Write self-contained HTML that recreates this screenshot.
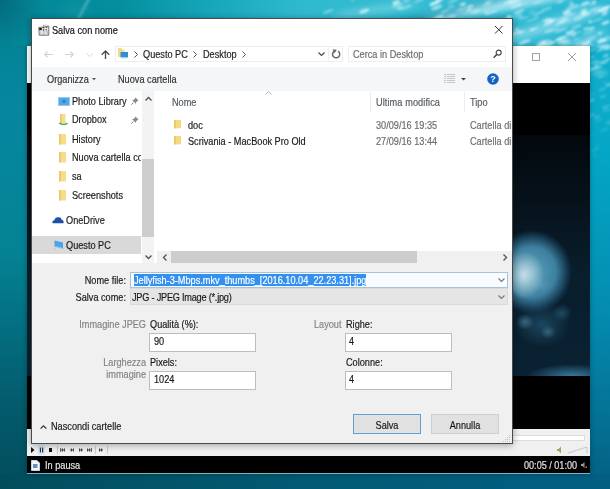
<!DOCTYPE html>
<html><head><meta charset="utf-8">
<style>
*{box-sizing:border-box;margin:0;padding:0}
html,body{width:610px;height:489px;overflow:hidden}
body{position:relative;font-family:"Liberation Sans",sans-serif;font-size:9.5px;letter-spacing:-0.15px;color:#1a1a1a;
background:linear-gradient(180deg,#04707f 0px,#048497 50px,#0787a0 105px,#048394 250px,#036f82 325px,#035b6c 405px,#024d5c 489px);}
.a{position:absolute}
.t{position:absolute;white-space:nowrap;line-height:12px;height:12px;font-size:10.2px;letter-spacing:0;transform:scaleX(.9);transform-origin:0 0;margin-top:.4px;-webkit-text-stroke:.18px currentColor}
.r{transform-origin:100% 0}
.c{transform-origin:50% 0}
svg{position:absolute;overflow:visible}
</style></head><body>

<!-- desktop water texture -->
<div class="a" style="left:0;top:0;width:610px;height:46px;background:linear-gradient(90deg,#048497 0px,#048a9a 45px,#048e9f 115px,#0a97a8 150px,#1aa8bd 220px,#2fb9cf 300px,#35bdd3 450px,#2cb8d4 610px)"></div>
<div class="a" style="left:0;top:0;width:80px;height:70px;background:radial-gradient(ellipse 45px 50px at 0 0,rgba(3,100,118,.75),rgba(3,100,118,0))"></div>

<div class="a" style="left:82px;top:-3px;width:3px;height:24px;background:rgba(140,210,222,.45);transform:rotate(28deg);filter:blur(1.2px)"></div>
<div class="a" style="left:60px;top:2px;width:30px;height:20px;background:rgba(40,160,175,.25);border-radius:50%;filter:blur(5px)"></div>
<div class="a" style="left:420px;top:2px;width:120px;height:10px;border-radius:50%;background:rgba(200,240,250,.45);transform:rotate(-12deg);filter:blur(3px)"></div>
<div class="a" style="left:500px;top:18px;width:110px;height:12px;border-radius:50%;background:rgba(200,240,250,.45);transform:rotate(-18deg);filter:blur(3px)"></div>
<div class="a" style="left:330px;top:6px;width:90px;height:8px;border-radius:50%;background:rgba(200,240,248,.3);transform:rotate(-8deg);filter:blur(3px)"></div>
<div class="a" style="left:540px;top:40px;width:70px;height:10px;border-radius:50%;background:rgba(200,240,250,.35);transform:rotate(-25deg);filter:blur(3px)"></div>
<div class="a" style="left:590px;top:46px;width:20px;height:443px;background:linear-gradient(180deg,#12b0cf 0px,#03a5c4 119px,#048db2 259px,#046b8e 399px,#025f82 443px)"></div>
<div class="a" style="left:592px;top:70px;width:16px;height:6px;border-radius:50%;background:rgba(200,240,250,.35);filter:blur(2px)"></div>
<div class="a" style="left:455px;top:0px;width:120px;height:9px;border-radius:50%;background:rgba(215,245,252,.55);transform:rotate(-9deg);filter:blur(2.5px)"></div>
<div class="a" style="left:360px;top:10px;width:150px;height:10px;border-radius:50%;background:rgba(5,130,160,.35);transform:rotate(-14deg);filter:blur(3px)"></div>
<svg style="left:300px;top:0" width="310" height="170" viewBox="0 0 310 170"><defs><filter id="bl" x="-20%" y="-20%" width="140%" height="140%"><feGaussianBlur stdDeviation="0.9"/></filter></defs><g filter="url(#bl)"><ellipse cx="56.2" cy="23.3" rx="4.2" ry="0.9" transform="rotate(-20 56.2 23.3)" fill="#e8fbff" opacity="0.29"/><ellipse cx="185.4" cy="38.0" rx="3.1" ry="1.7" transform="rotate(-20 185.4 38.0)" fill="#e8fbff" opacity="0.68"/><ellipse cx="97.0" cy="5.4" rx="6.1" ry="1.1" transform="rotate(-20 97.0 5.4)" fill="#e8fbff" opacity="0.51"/><ellipse cx="236.9" cy="17.1" rx="2.3" ry="0.9" transform="rotate(-20 236.9 17.1)" fill="#e8fbff" opacity="0.34"/><ellipse cx="246.0" cy="19.7" rx="4.9" ry="1.4" transform="rotate(-20 246.0 19.7)" fill="#e8fbff" opacity="0.38"/><ellipse cx="270.0" cy="32.2" rx="4.9" ry="1.5" transform="rotate(-20 270.0 32.2)" fill="#e8fbff" opacity="0.64"/><ellipse cx="100.1" cy="22.5" rx="5.3" ry="1.9" transform="rotate(-20 100.1 22.5)" fill="#e8fbff" opacity="0.51"/><ellipse cx="286.2" cy="14.4" rx="5.0" ry="1.6" transform="rotate(-20 286.2 14.4)" fill="#e8fbff" opacity="0.46"/><ellipse cx="279.2" cy="43.5" rx="5.3" ry="0.9" transform="rotate(-20 279.2 43.5)" fill="#e8fbff" opacity="0.57"/><ellipse cx="238.8" cy="45.7" rx="3.4" ry="1.3" transform="rotate(-20 238.8 45.7)" fill="#e8fbff" opacity="0.55"/><ellipse cx="285.4" cy="3.7" rx="4.7" ry="2.0" transform="rotate(-20 285.4 3.7)" fill="#e8fbff" opacity="0.62"/><ellipse cx="284.0" cy="12.8" rx="3.8" ry="2.0" transform="rotate(-20 284.0 12.8)" fill="#e8fbff" opacity="0.68"/><ellipse cx="99.7" cy="8.1" rx="3.2" ry="1.5" transform="rotate(-20 99.7 8.1)" fill="#e8fbff" opacity="0.52"/><ellipse cx="139.0" cy="0.2" rx="3.8" ry="1.6" transform="rotate(-20 139.0 0.2)" fill="#e8fbff" opacity="0.68"/><ellipse cx="248.2" cy="23.7" rx="5.4" ry="0.9" transform="rotate(-20 248.2 23.7)" fill="#e8fbff" opacity="0.65"/><ellipse cx="267.1" cy="40.2" rx="4.0" ry="1.4" transform="rotate(-20 267.1 40.2)" fill="#e8fbff" opacity="0.30"/><ellipse cx="235.9" cy="2.9" rx="3.0" ry="1.0" transform="rotate(-20 235.9 2.9)" fill="#e8fbff" opacity="0.40"/><ellipse cx="52.9" cy="0.0" rx="2.5" ry="1.3" transform="rotate(-20 52.9 0.0)" fill="#e8fbff" opacity="0.26"/><ellipse cx="286.0" cy="28.2" rx="3.3" ry="1.3" transform="rotate(-20 286.0 28.2)" fill="#e8fbff" opacity="0.41"/><ellipse cx="196.1" cy="22.3" rx="2.5" ry="1.3" transform="rotate(-20 196.1 22.3)" fill="#e8fbff" opacity="0.37"/><ellipse cx="277.0" cy="7.4" rx="6.8" ry="1.5" transform="rotate(-20 277.0 7.4)" fill="#e8fbff" opacity="0.32"/><ellipse cx="214.9" cy="1.2" rx="6.9" ry="2.0" transform="rotate(-20 214.9 1.2)" fill="#e8fbff" opacity="0.56"/><ellipse cx="138.5" cy="16.9" rx="5.9" ry="1.5" transform="rotate(-20 138.5 16.9)" fill="#e8fbff" opacity="0.60"/><ellipse cx="307.2" cy="39.2" rx="6.1" ry="1.8" transform="rotate(-20 307.2 39.2)" fill="#e8fbff" opacity="0.35"/><ellipse cx="208.8" cy="16.4" rx="2.1" ry="1.2" transform="rotate(-20 208.8 16.4)" fill="#e8fbff" opacity="0.37"/><ellipse cx="248.7" cy="44.0" rx="6.7" ry="2.2" transform="rotate(-20 248.7 44.0)" fill="#e8fbff" opacity="0.68"/><ellipse cx="169.2" cy="10.1" rx="3.0" ry="1.1" transform="rotate(-20 169.2 10.1)" fill="#e8fbff" opacity="0.53"/><ellipse cx="291.1" cy="38.7" rx="5.3" ry="1.9" transform="rotate(-20 291.1 38.7)" fill="#e8fbff" opacity="0.29"/><ellipse cx="241.7" cy="41.8" rx="5.8" ry="1.5" transform="rotate(-20 241.7 41.8)" fill="#e8fbff" opacity="0.33"/><ellipse cx="268.9" cy="15.3" rx="6.9" ry="1.4" transform="rotate(-20 268.9 15.3)" fill="#e8fbff" opacity="0.43"/><ellipse cx="300.0" cy="33.3" rx="2.6" ry="1.0" transform="rotate(-20 300.0 33.3)" fill="#e8fbff" opacity="0.66"/><ellipse cx="272.5" cy="6.7" rx="6.9" ry="1.7" transform="rotate(-20 272.5 6.7)" fill="#e8fbff" opacity="0.41"/><ellipse cx="216.2" cy="6.0" rx="6.9" ry="1.7" transform="rotate(-20 216.2 6.0)" fill="#e8fbff" opacity="0.49"/><ellipse cx="297.5" cy="20.0" rx="6.1" ry="1.1" transform="rotate(-20 297.5 20.0)" fill="#e8fbff" opacity="0.36"/><ellipse cx="137.9" cy="19.3" rx="6.6" ry="1.3" transform="rotate(-20 137.9 19.3)" fill="#e8fbff" opacity="0.46"/><ellipse cx="224.3" cy="41.6" rx="6.6" ry="1.5" transform="rotate(-20 224.3 41.6)" fill="#e8fbff" opacity="0.49"/><ellipse cx="210.2" cy="0.9" rx="2.9" ry="0.8" transform="rotate(-20 210.2 0.9)" fill="#e8fbff" opacity="0.61"/><ellipse cx="218.1" cy="15.0" rx="4.8" ry="1.9" transform="rotate(-20 218.1 15.0)" fill="#e8fbff" opacity="0.30"/><ellipse cx="219.0" cy="11.4" rx="5.9" ry="1.5" transform="rotate(-20 219.0 11.4)" fill="#e8fbff" opacity="0.50"/><ellipse cx="262.9" cy="42.0" rx="5.1" ry="1.5" transform="rotate(-20 262.9 42.0)" fill="#e8fbff" opacity="0.48"/><ellipse cx="248.7" cy="20.8" rx="4.4" ry="2.1" transform="rotate(-20 248.7 20.8)" fill="#e8fbff" opacity="0.56"/><ellipse cx="286.4" cy="43.3" rx="4.8" ry="2.1" transform="rotate(-20 286.4 43.3)" fill="#e8fbff" opacity="0.63"/><ellipse cx="64.2" cy="11.1" rx="5.3" ry="1.9" transform="rotate(-20 64.2 11.1)" fill="#e8fbff" opacity="0.65"/><ellipse cx="124.8" cy="43.8" rx="4.4" ry="2.2" transform="rotate(-20 124.8 43.8)" fill="#e8fbff" opacity="0.62"/><ellipse cx="162.0" cy="9.0" rx="5.6" ry="0.8" transform="rotate(-20 162.0 9.0)" fill="#e8fbff" opacity="0.50"/><ellipse cx="189.5" cy="0.8" rx="5.1" ry="1.5" transform="rotate(-20 189.5 0.8)" fill="#e8fbff" opacity="0.28"/><ellipse cx="307.2" cy="36.3" rx="2.5" ry="1.2" transform="rotate(-20 307.2 36.3)" fill="#e8fbff" opacity="0.27"/><ellipse cx="266.9" cy="12.4" rx="4.1" ry="2.1" transform="rotate(-20 266.9 12.4)" fill="#e8fbff" opacity="0.62"/><ellipse cx="221.4" cy="32.2" rx="2.3" ry="1.8" transform="rotate(-20 221.4 32.2)" fill="#e8fbff" opacity="0.44"/><ellipse cx="271.5" cy="3.9" rx="2.3" ry="2.0" transform="rotate(-20 271.5 3.9)" fill="#e8fbff" opacity="0.45"/><ellipse cx="131.2" cy="5.0" rx="2.3" ry="1.1" transform="rotate(-20 131.2 5.0)" fill="#e8fbff" opacity="0.39"/><ellipse cx="152.0" cy="34.9" rx="4.5" ry="1.0" transform="rotate(-20 152.0 34.9)" fill="#e8fbff" opacity="0.41"/><ellipse cx="28.0" cy="11.5" rx="5.7" ry="1.6" transform="rotate(-20 28.0 11.5)" fill="#e8fbff" opacity="0.34"/><ellipse cx="198.3" cy="43.0" rx="6.1" ry="1.4" transform="rotate(-20 198.3 43.0)" fill="#e8fbff" opacity="0.47"/><ellipse cx="278.1" cy="18.1" rx="5.4" ry="2.2" transform="rotate(-20 278.1 18.1)" fill="#e8fbff" opacity="0.40"/><ellipse cx="277.7" cy="32.5" rx="4.0" ry="1.3" transform="rotate(-20 277.7 32.5)" fill="#e8fbff" opacity="0.27"/><ellipse cx="136.7" cy="7.5" rx="6.2" ry="2.0" transform="rotate(-20 136.7 7.5)" fill="#e8fbff" opacity="0.55"/><ellipse cx="145.0" cy="11.1" rx="4.3" ry="1.0" transform="rotate(-20 145.0 11.1)" fill="#e8fbff" opacity="0.45"/><ellipse cx="153.4" cy="16.4" rx="3.9" ry="1.5" transform="rotate(-20 153.4 16.4)" fill="#e8fbff" opacity="0.48"/><ellipse cx="118.4" cy="23.2" rx="3.3" ry="0.9" transform="rotate(-20 118.4 23.2)" fill="#e8fbff" opacity="0.43"/><ellipse cx="261.0" cy="30.2" rx="6.4" ry="1.3" transform="rotate(-20 261.0 30.2)" fill="#e8fbff" opacity="0.40"/><ellipse cx="307.2" cy="6.9" rx="5.2" ry="0.9" transform="rotate(-20 307.2 6.9)" fill="#e8fbff" opacity="0.63"/><ellipse cx="289.4" cy="28.9" rx="6.1" ry="1.0" transform="rotate(-20 289.4 28.9)" fill="#e8fbff" opacity="0.49"/><ellipse cx="276.5" cy="26.9" rx="5.4" ry="1.8" transform="rotate(-20 276.5 26.9)" fill="#e8fbff" opacity="0.35"/><ellipse cx="234.4" cy="28.8" rx="4.4" ry="0.8" transform="rotate(-20 234.4 28.8)" fill="#e8fbff" opacity="0.61"/><ellipse cx="260.5" cy="23.1" rx="5.3" ry="0.9" transform="rotate(-20 260.5 23.1)" fill="#e8fbff" opacity="0.58"/><ellipse cx="135.6" cy="3.4" rx="5.6" ry="1.1" transform="rotate(-20 135.6 3.4)" fill="#e8fbff" opacity="0.58"/><ellipse cx="305.5" cy="22.7" rx="4.4" ry="1.8" transform="rotate(-20 305.5 22.7)" fill="#e8fbff" opacity="0.60"/><ellipse cx="232.0" cy="29.6" rx="2.7" ry="1.2" transform="rotate(-20 232.0 29.6)" fill="#e8fbff" opacity="0.58"/><ellipse cx="151.9" cy="26.1" rx="2.3" ry="1.2" transform="rotate(-20 151.9 26.1)" fill="#e8fbff" opacity="0.55"/><ellipse cx="248.6" cy="31.1" rx="4.6" ry="1.5" transform="rotate(-20 248.6 31.1)" fill="#e8fbff" opacity="0.46"/><ellipse cx="86.2" cy="41.1" rx="6.9" ry="2.1" transform="rotate(-20 86.2 41.1)" fill="#e8fbff" opacity="0.26"/><ellipse cx="191.9" cy="12.4" rx="6.7" ry="1.1" transform="rotate(-20 191.9 12.4)" fill="#e8fbff" opacity="0.51"/><ellipse cx="288.5" cy="32.4" rx="6.5" ry="1.5" transform="rotate(-20 288.5 32.4)" fill="#e8fbff" opacity="0.26"/><ellipse cx="151.1" cy="6.5" rx="3.6" ry="2.0" transform="rotate(-20 151.1 6.5)" fill="#e8fbff" opacity="0.25"/><ellipse cx="261.0" cy="38.6" rx="6.6" ry="1.8" transform="rotate(-20 261.0 38.6)" fill="#e8fbff" opacity="0.66"/><ellipse cx="147.5" cy="17.1" rx="7.0" ry="1.6" transform="rotate(-20 147.5 17.1)" fill="#e8fbff" opacity="0.41"/><ellipse cx="186.3" cy="12.7" rx="2.5" ry="2.0" transform="rotate(-20 186.3 12.7)" fill="#e8fbff" opacity="0.38"/><ellipse cx="297.9" cy="11.5" rx="4.6" ry="1.1" transform="rotate(-20 297.9 11.5)" fill="#e8fbff" opacity="0.42"/><ellipse cx="301.8" cy="40.7" rx="5.2" ry="2.1" transform="rotate(-20 301.8 40.7)" fill="#e8fbff" opacity="0.67"/><ellipse cx="216.4" cy="33.1" rx="5.7" ry="1.4" transform="rotate(-20 216.4 33.1)" fill="#e8fbff" opacity="0.59"/><ellipse cx="238.2" cy="13.2" rx="6.6" ry="1.0" transform="rotate(-20 238.2 13.2)" fill="#e8fbff" opacity="0.46"/><ellipse cx="305.6" cy="12.0" rx="3.5" ry="1.6" transform="rotate(-20 305.6 12.0)" fill="#e8fbff" opacity="0.43"/><ellipse cx="106.0" cy="7.4" rx="6.5" ry="1.5" transform="rotate(-20 106.0 7.4)" fill="#e8fbff" opacity="0.35"/><ellipse cx="292.2" cy="45.8" rx="2.7" ry="1.1" transform="rotate(-20 292.2 45.8)" fill="#e8fbff" opacity="0.29"/><ellipse cx="162.8" cy="4.2" rx="3.3" ry="1.6" transform="rotate(-20 162.8 4.2)" fill="#e8fbff" opacity="0.65"/><ellipse cx="260.8" cy="19.0" rx="4.6" ry="1.3" transform="rotate(-20 260.8 19.0)" fill="#e8fbff" opacity="0.40"/><ellipse cx="283.7" cy="9.9" rx="3.2" ry="1.4" transform="rotate(-20 283.7 9.9)" fill="#e8fbff" opacity="0.45"/><ellipse cx="301.4" cy="39.0" rx="2.1" ry="0.8" transform="rotate(-20 301.4 39.0)" fill="#e8fbff" opacity="0.57"/><ellipse cx="290.2" cy="21.8" rx="2.0" ry="1.3" transform="rotate(-20 290.2 21.8)" fill="#e8fbff" opacity="0.67"/><ellipse cx="276.3" cy="39.4" rx="3.2" ry="1.0" transform="rotate(-20 276.3 39.4)" fill="#e8fbff" opacity="0.32"/><ellipse cx="254.9" cy="29.8" rx="4.3" ry="1.6" transform="rotate(-20 254.9 29.8)" fill="#e8fbff" opacity="0.27"/><ellipse cx="267.5" cy="10.7" rx="5.2" ry="1.2" transform="rotate(-20 267.5 10.7)" fill="#e8fbff" opacity="0.31"/><ellipse cx="224.2" cy="17.9" rx="5.0" ry="0.8" transform="rotate(-20 224.2 17.9)" fill="#e8fbff" opacity="0.39"/><ellipse cx="194.7" cy="44.1" rx="6.4" ry="1.5" transform="rotate(-20 194.7 44.1)" fill="#e8fbff" opacity="0.36"/><ellipse cx="152.8" cy="1.0" rx="5.4" ry="1.4" transform="rotate(-20 152.8 1.0)" fill="#e8fbff" opacity="0.37"/><ellipse cx="243.2" cy="42.6" rx="2.2" ry="1.3" transform="rotate(-20 243.2 42.6)" fill="#e8fbff" opacity="0.44"/><ellipse cx="246.5" cy="9.1" rx="5.7" ry="1.5" transform="rotate(-20 246.5 9.1)" fill="#e8fbff" opacity="0.34"/><ellipse cx="304.4" cy="14.3" rx="3.2" ry="1.1" transform="rotate(-20 304.4 14.3)" fill="#e8fbff" opacity="0.59"/><ellipse cx="149.0" cy="43.8" rx="2.9" ry="1.1" transform="rotate(-20 149.0 43.8)" fill="#e8fbff" opacity="0.44"/><ellipse cx="242.8" cy="43.6" rx="4.0" ry="1.1" transform="rotate(-20 242.8 43.6)" fill="#e8fbff" opacity="0.69"/><ellipse cx="96.1" cy="2.4" rx="4.0" ry="2.1" transform="rotate(-20 96.1 2.4)" fill="#e8fbff" opacity="0.65"/><ellipse cx="260.1" cy="1.5" rx="3.9" ry="1.3" transform="rotate(-20 260.1 1.5)" fill="#e8fbff" opacity="0.40"/><ellipse cx="106.8" cy="0.1" rx="3.8" ry="2.1" transform="rotate(-20 106.8 0.1)" fill="#e8fbff" opacity="0.31"/><ellipse cx="303.3" cy="9.5" rx="6.1" ry="2.0" transform="rotate(-20 303.3 9.5)" fill="#e8fbff" opacity="0.44"/><ellipse cx="294.8" cy="8.9" rx="6.5" ry="0.8" transform="rotate(-20 294.8 8.9)" fill="#e8fbff" opacity="0.43"/><ellipse cx="273.6" cy="35.3" rx="2.2" ry="0.9" transform="rotate(-20 273.6 35.3)" fill="#e8fbff" opacity="0.66"/><ellipse cx="232.0" cy="12.1" rx="3.6" ry="1.2" transform="rotate(-20 232.0 12.1)" fill="#e8fbff" opacity="0.25"/><ellipse cx="262.0" cy="42.2" rx="6.7" ry="0.8" transform="rotate(-20 262.0 42.2)" fill="#e8fbff" opacity="0.36"/><ellipse cx="175.3" cy="11.5" rx="4.5" ry="2.1" transform="rotate(-20 175.3 11.5)" fill="#e8fbff" opacity="0.33"/><ellipse cx="271.7" cy="34.0" rx="5.9" ry="1.7" transform="rotate(-20 271.7 34.0)" fill="#e8fbff" opacity="0.40"/><ellipse cx="134.1" cy="3.0" rx="4.8" ry="1.3" transform="rotate(-20 134.1 3.0)" fill="#e8fbff" opacity="0.69"/><ellipse cx="287.8" cy="45.4" rx="2.4" ry="0.9" transform="rotate(-20 287.8 45.4)" fill="#e8fbff" opacity="0.47"/><ellipse cx="252.4" cy="20.6" rx="4.1" ry="1.7" transform="rotate(-20 252.4 20.6)" fill="#e8fbff" opacity="0.55"/><ellipse cx="260.4" cy="39.0" rx="2.6" ry="2.0" transform="rotate(-20 260.4 39.0)" fill="#e8fbff" opacity="0.38"/><ellipse cx="220.5" cy="17.2" rx="3.0" ry="1.1" transform="rotate(-20 220.5 17.2)" fill="#e8fbff" opacity="0.36"/><ellipse cx="240.1" cy="45.6" rx="4.4" ry="1.9" transform="rotate(-20 240.1 45.6)" fill="#e8fbff" opacity="0.63"/><ellipse cx="293.8" cy="1.9" rx="2.6" ry="1.1" transform="rotate(-20 293.8 1.9)" fill="#e8fbff" opacity="0.69"/><ellipse cx="224.3" cy="42.8" rx="6.3" ry="1.4" transform="rotate(-20 224.3 42.8)" fill="#e8fbff" opacity="0.37"/><ellipse cx="266.6" cy="43.5" rx="5.0" ry="1.7" transform="rotate(-20 266.6 43.5)" fill="#e8fbff" opacity="0.35"/><ellipse cx="170.4" cy="6.5" rx="3.3" ry="1.6" transform="rotate(-20 170.4 6.5)" fill="#e8fbff" opacity="0.54"/><ellipse cx="119.2" cy="0.5" rx="5.4" ry="1.1" transform="rotate(-20 119.2 0.5)" fill="#e8fbff" opacity="0.39"/><ellipse cx="216.6" cy="29.4" rx="2.8" ry="1.8" transform="rotate(-20 216.6 29.4)" fill="#e8fbff" opacity="0.43"/><ellipse cx="154.2" cy="26.1" rx="4.1" ry="2.0" transform="rotate(-20 154.2 26.1)" fill="#e8fbff" opacity="0.70"/><ellipse cx="185.2" cy="37.7" rx="6.4" ry="1.4" transform="rotate(-20 185.2 37.7)" fill="#e8fbff" opacity="0.32"/><ellipse cx="292.9" cy="4.1" rx="3.9" ry="1.5" transform="rotate(-20 292.9 4.1)" fill="#e8fbff" opacity="0.32"/><ellipse cx="303.8" cy="9.1" rx="6.7" ry="2.2" transform="rotate(-20 303.8 9.1)" fill="#e8fbff" opacity="0.47"/><ellipse cx="291.8" cy="28.5" rx="2.8" ry="1.9" transform="rotate(-20 291.8 28.5)" fill="#e8fbff" opacity="0.35"/><ellipse cx="208.9" cy="17.6" rx="3.2" ry="1.8" transform="rotate(-20 208.9 17.6)" fill="#e8fbff" opacity="0.65"/><ellipse cx="43.7" cy="38.6" rx="5.0" ry="1.6" transform="rotate(-20 43.7 38.6)" fill="#e8fbff" opacity="0.53"/><ellipse cx="185.7" cy="30.3" rx="4.2" ry="0.8" transform="rotate(-20 185.7 30.3)" fill="#e8fbff" opacity="0.53"/><ellipse cx="267.1" cy="21.1" rx="4.4" ry="0.9" transform="rotate(-20 267.1 21.1)" fill="#e8fbff" opacity="0.31"/><ellipse cx="187.0" cy="4.2" rx="4.6" ry="0.9" transform="rotate(-20 187.0 4.2)" fill="#e8fbff" opacity="0.54"/><ellipse cx="207.3" cy="2.5" rx="3.9" ry="2.1" transform="rotate(-20 207.3 2.5)" fill="#e8fbff" opacity="0.31"/><ellipse cx="282.6" cy="45.8" rx="6.1" ry="1.1" transform="rotate(-20 282.6 45.8)" fill="#e8fbff" opacity="0.69"/><ellipse cx="102.8" cy="41.2" rx="6.1" ry="1.0" transform="rotate(-20 102.8 41.2)" fill="#e8fbff" opacity="0.48"/><ellipse cx="294.9" cy="9.6" rx="4.5" ry="1.2" transform="rotate(-20 294.9 9.6)" fill="#e8fbff" opacity="0.27"/><ellipse cx="245.9" cy="41.2" rx="5.9" ry="1.0" transform="rotate(-20 245.9 41.2)" fill="#e8fbff" opacity="0.49"/><ellipse cx="177.3" cy="36.7" rx="7.0" ry="1.6" transform="rotate(-20 177.3 36.7)" fill="#e8fbff" opacity="0.41"/><ellipse cx="263.9" cy="20.3" rx="5.7" ry="0.9" transform="rotate(-20 263.9 20.3)" fill="#e8fbff" opacity="0.62"/><ellipse cx="224.9" cy="30.5" rx="2.0" ry="0.8" transform="rotate(-20 224.9 30.5)" fill="#e8fbff" opacity="0.32"/><ellipse cx="231.8" cy="19.9" rx="6.5" ry="1.0" transform="rotate(-20 231.8 19.9)" fill="#e8fbff" opacity="0.35"/><ellipse cx="240.1" cy="1.0" rx="3.8" ry="0.9" transform="rotate(-20 240.1 1.0)" fill="#e8fbff" opacity="0.41"/><ellipse cx="93.1" cy="43.1" rx="2.7" ry="0.9" transform="rotate(-20 93.1 43.1)" fill="#e8fbff" opacity="0.54"/><ellipse cx="307.4" cy="129.0" rx="3.2" ry="1.1" transform="rotate(-20 307.4 129.0)" fill="#e8fbff" opacity="0.07"/><ellipse cx="302.9" cy="96.6" rx="3.1" ry="1.6" transform="rotate(-20 302.9 96.6)" fill="#e8fbff" opacity="0.22"/><ellipse cx="308.7" cy="121.4" rx="2.7" ry="1.9" transform="rotate(-20 308.7 121.4)" fill="#e8fbff" opacity="0.09"/><ellipse cx="300.6" cy="77.0" rx="2.7" ry="0.9" transform="rotate(-20 300.6 77.0)" fill="#e8fbff" opacity="0.36"/><ellipse cx="290.2" cy="95.1" rx="4.8" ry="1.0" transform="rotate(-20 290.2 95.1)" fill="#e8fbff" opacity="0.17"/><ellipse cx="302.2" cy="89.3" rx="3.9" ry="1.8" transform="rotate(-20 302.2 89.3)" fill="#e8fbff" opacity="0.17"/><ellipse cx="296.2" cy="65.7" rx="2.1" ry="1.9" transform="rotate(-20 296.2 65.7)" fill="#e8fbff" opacity="0.40"/><ellipse cx="304.3" cy="46.1" rx="4.5" ry="1.7" transform="rotate(-20 304.3 46.1)" fill="#e8fbff" opacity="0.36"/><ellipse cx="304.8" cy="82.5" rx="2.7" ry="0.9" transform="rotate(-20 304.8 82.5)" fill="#e8fbff" opacity="0.20"/><ellipse cx="290.8" cy="69.3" rx="4.2" ry="1.6" transform="rotate(-20 290.8 69.3)" fill="#e8fbff" opacity="0.41"/><ellipse cx="304.2" cy="62.5" rx="3.7" ry="1.3" transform="rotate(-20 304.2 62.5)" fill="#e8fbff" opacity="0.42"/><ellipse cx="300.5" cy="62.4" rx="3.9" ry="2.0" transform="rotate(-20 300.5 62.4)" fill="#e8fbff" opacity="0.24"/><ellipse cx="307.6" cy="46.2" rx="2.8" ry="1.1" transform="rotate(-20 307.6 46.2)" fill="#e8fbff" opacity="0.46"/><ellipse cx="308.9" cy="123.3" rx="3.0" ry="1.9" transform="rotate(-20 308.9 123.3)" fill="#e8fbff" opacity="0.13"/><ellipse cx="294.8" cy="149.8" rx="3.9" ry="1.6" transform="rotate(-20 294.8 149.8)" fill="#e8fbff" opacity="0.09"/><ellipse cx="309.6" cy="84.6" rx="4.5" ry="1.6" transform="rotate(-20 309.6 84.6)" fill="#e8fbff" opacity="0.35"/><ellipse cx="298.7" cy="120.0" rx="3.7" ry="1.2" transform="rotate(-20 298.7 120.0)" fill="#e8fbff" opacity="0.12"/><ellipse cx="302.5" cy="48.6" rx="4.7" ry="1.0" transform="rotate(-20 302.5 48.6)" fill="#e8fbff" opacity="0.21"/><ellipse cx="292.1" cy="153.4" rx="3.0" ry="1.0" transform="rotate(-20 292.1 153.4)" fill="#e8fbff" opacity="0.04"/><ellipse cx="290.8" cy="115.2" rx="3.9" ry="1.6" transform="rotate(-20 290.8 115.2)" fill="#e8fbff" opacity="0.21"/><ellipse cx="291.3" cy="100.4" rx="3.1" ry="1.8" transform="rotate(-20 291.3 100.4)" fill="#e8fbff" opacity="0.28"/><ellipse cx="307.8" cy="48.0" rx="4.6" ry="1.9" transform="rotate(-20 307.8 48.0)" fill="#e8fbff" opacity="0.52"/><ellipse cx="292.1" cy="57.2" rx="2.3" ry="0.8" transform="rotate(-20 292.1 57.2)" fill="#e8fbff" opacity="0.45"/><ellipse cx="306.2" cy="106.6" rx="4.5" ry="1.6" transform="rotate(-20 306.2 106.6)" fill="#e8fbff" opacity="0.16"/><ellipse cx="292.0" cy="49.7" rx="4.3" ry="1.0" transform="rotate(-20 292.0 49.7)" fill="#e8fbff" opacity="0.30"/><ellipse cx="298.5" cy="46.4" rx="2.8" ry="1.1" transform="rotate(-20 298.5 46.4)" fill="#e8fbff" opacity="0.45"/><ellipse cx="297.4" cy="67.8" rx="4.9" ry="1.4" transform="rotate(-20 297.4 67.8)" fill="#e8fbff" opacity="0.41"/><ellipse cx="302.4" cy="46.7" rx="3.2" ry="1.3" transform="rotate(-20 302.4 46.7)" fill="#e8fbff" opacity="0.47"/><ellipse cx="296.9" cy="117.0" rx="3.6" ry="1.1" transform="rotate(-20 296.9 117.0)" fill="#e8fbff" opacity="0.23"/><ellipse cx="291.8" cy="135.1" rx="2.5" ry="0.8" transform="rotate(-20 291.8 135.1)" fill="#e8fbff" opacity="0.09"/><ellipse cx="305.2" cy="162.0" rx="2.0" ry="1.4" transform="rotate(-20 305.2 162.0)" fill="#e8fbff" opacity="0.04"/><ellipse cx="305.9" cy="55.5" rx="3.5" ry="1.2" transform="rotate(-20 305.9 55.5)" fill="#e8fbff" opacity="0.46"/><ellipse cx="295.2" cy="156.0" rx="2.9" ry="1.1" transform="rotate(-20 295.2 156.0)" fill="#e8fbff" opacity="0.07"/><ellipse cx="300.0" cy="50.4" rx="3.9" ry="0.9" transform="rotate(-20 300.0 50.4)" fill="#e8fbff" opacity="0.46"/><ellipse cx="303.9" cy="129.8" rx="3.9" ry="1.2" transform="rotate(-20 303.9 129.8)" fill="#e8fbff" opacity="0.12"/><ellipse cx="297.9" cy="146.8" rx="2.3" ry="1.9" transform="rotate(-20 297.9 146.8)" fill="#e8fbff" opacity="0.05"/><ellipse cx="294.1" cy="62.2" rx="4.7" ry="1.4" transform="rotate(-20 294.1 62.2)" fill="#e8fbff" opacity="0.29"/><ellipse cx="307.7" cy="59.5" rx="3.4" ry="1.4" transform="rotate(-20 307.7 59.5)" fill="#e8fbff" opacity="0.42"/><ellipse cx="305.1" cy="108.3" rx="3.0" ry="1.2" transform="rotate(-20 305.1 108.3)" fill="#e8fbff" opacity="0.13"/><ellipse cx="306.9" cy="110.6" rx="4.2" ry="1.0" transform="rotate(-20 306.9 110.6)" fill="#e8fbff" opacity="0.18"/></g></svg>
<div class="a" style="left:0;top:474px;width:610px;height:15px;background:linear-gradient(90deg,#024d5c 0px,#025a73 300px,#025f82 575px,#025f82 610px)"></div>

<!-- ===== video player window ===== -->
<div class="a" style="left:27px;top:46px;width:563px;height:428px;background:#000;box-shadow:0 0 5px rgba(0,0,0,.3)"></div>
<div class="a" style="left:27px;top:46px;width:563px;height:37px;background:#fff"></div>
<div class="a" style="left:27px;top:135px;width:563px;height:241px;background:
radial-gradient(ellipse 20px 24px at 497px 140px,rgba(225,240,245,.8),rgba(225,240,245,0) 100%),
radial-gradient(ellipse 40px 42px at 505px 137px,rgba(100,170,195,.95) 0%,rgba(70,145,180,.85) 60%,rgba(40,100,140,.3) 90%,rgba(20,70,100,0) 100%),
radial-gradient(ellipse 10px 7px at 515px 150px,rgba(200,230,240,.45),rgba(200,230,240,0) 100%),
radial-gradient(ellipse 9px 8px at 498px 187px,rgba(90,150,180,.55),rgba(90,150,180,0) 100%),
radial-gradient(ellipse 8px 7px at 521px 197px,rgba(80,140,170,.5),rgba(80,140,170,0) 100%),
radial-gradient(ellipse 10px 9px at 535px 178px,rgba(60,120,155,.45),rgba(60,120,155,0) 100%),
radial-gradient(ellipse 28px 22px at 515px 190px,rgba(50,115,150,.45),rgba(10,40,60,0) 100%),
radial-gradient(ellipse 45px 12px at 545px 241px,rgba(60,130,170,.9),rgba(10,40,60,0) 100%),
linear-gradient(180deg,#03080d 0%,#06111a 25%,#091d2b 55%,#0a2233 100%)"></div>
<div class="a" style="left:27px;top:429px;width:563px;height:27px;background:#f0f0f0"></div>
<div class="a" style="left:27px;top:473px;width:563px;height:1px;background:#7fb3bd"></div>
<div class="a" style="left:510px;top:435px;width:75px;height:6px;background:#fff;border:1px solid #dcdcdc"></div>
<div class="a" style="left:532px;top:53px;width:8px;height:8px;border:1px solid #a0a0a0"></div>
<svg style="left:568px;top:53px" width="8" height="8"><path d="M0 0L8 8M8 0L0 8" stroke="#a0a0a0" stroke-width="1"/></svg>
<!-- status bar -->
<svg style="left:31px;top:460px" width="9" height="11" viewBox="0 0 9 11"><path d="M0.5 0.5H6L8.5 3V10.5H0.5Z" fill="#f4f7fb" stroke="#c9d3de" stroke-width="1"/><rect x="2" y="4" width="4.5" height="4" fill="#6a8fb5"/></svg>
<div class="t" style="left:44.5px;top:460px;color:#e8e8e8;font-size:10.2px">In pausa</div>
<div class="t" style="left:523.5px;top:460px;color:#e0e0e0;font-size:10.1px">00:05 / 01:00</div>
<svg style="left:581px;top:462px" width="6" height="6"><path d="M0 2h1.5l2-2v6l-2-2H0Z" fill="#999"/><path d="M4.5 4.5h1.5v1.5h-1.5z" fill="#888"/></svg>
<!-- player controls -->
<svg style="left:27px;top:444px" width="90" height="12" viewBox="0 0 90 12">
<path d="M4 3L7.5 6L4 9Z" fill="#111"/>
<rect x="11" y="1" width="7" height="10" fill="#d5e6f6"/>
<rect x="12.8" y="3.5" width="1.2" height="5" fill="#333"/><rect x="15" y="3.5" width="1.2" height="5" fill="#333"/>
<rect x="22" y="4" width="3" height="4" fill="#111"/>
<rect x="30" y="2" width="1" height="8" fill="#c8c8c8"/>
<path d="M33.5 4v4" stroke="#444" stroke-width="0.8"/><path d="M34 6l2-2v4zM36 6l2-2v4z" fill="#444"/>
<path d="M43 6l2-2v4zM45 6l2-2v4z" fill="#444"/>
<path d="M52 4v4l2-2zM54 4v4l2-2z" fill="#444"/>
<path d="M60 4v4l2-2zM62 4v4l2-2z" fill="#444"/><path d="M64.5 4v4" stroke="#444" stroke-width="0.8"/>
<rect x="68" y="2" width="1" height="8" fill="#c8c8c8"/>
<path d="M72 4v4l2-2zM74 4v4l2-2z" fill="#444"/>
<rect x="80" y="2" width="1" height="8" fill="#c8c8c8"/>
</svg>
<svg style="left:555px;top:445px" width="35" height="10" viewBox="0 0 35 10"><path d="M2 4h1.5l2.5-2.5v7L3.5 6H2Z" fill="#a3a36a"/><path d="M13 8L32 2V8" fill="none" stroke="#bbb" stroke-width="0.8"/></svg>

<!-- ===== dialog ===== -->
<div class="a" style="left:31px;top:18px;width:482px;height:426px;background:#f0f0f0;border:1px solid #4a4a4a;box-shadow:0 1px 7px rgba(0,0,0,.35)"></div>
<div class="a" style="left:32px;top:19px;width:480px;height:48px;background:#fff"></div>
<div class="a" style="left:32px;top:67px;width:480px;height:24px;background:#f5f6f8"></div>
<div class="a" style="left:32px;top:91px;width:480px;height:172px;background:#fff"></div>

<!-- title bar -->
<svg style="left:38px;top:24px" width="12" height="12" viewBox="0 0 12 12">
<path d="M0.8 3.5L10.8 2.4V11.2H1.2Z" fill="#e9eeec" stroke="#7a7068" stroke-width="1"/>
<rect x="1.2" y="4" width="2.6" height="2.2" fill="#1e1a18"/>
<circle cx="5.5" cy="3.8" r="0.8" fill="#333"/><circle cx="8.5" cy="3.3" r="0.8" fill="#555"/>
<circle cx="5.5" cy="6" r="0.8" fill="#333"/><circle cx="8.2" cy="5.8" r="0.8" fill="#444"/>
<circle cx="5.7" cy="1.3" r="0.6" fill="#666"/><circle cx="7.8" cy="1.0" r="0.6" fill="#888"/><circle cx="10" cy="1.2" r="0.5" fill="#888"/>
<path d="M3 7.5V10.5M5.2 7.5H6.8V9H5.4V10.5H6.9M8.4 7.5H9.8V10.5M8.4 9H9.8" stroke="#9aa" stroke-width="0.7" fill="none"/>
</svg>
<div class="t" style="left:52px;top:24.3px;color:#111">Salva con nome</div>
<svg style="left:495px;top:26px" width="8" height="8"><path d="M0 0L7.5 7.5M7.5 0L0 7.5" stroke="#333" stroke-width="1"/></svg>

<!-- nav arrows -->
<svg style="left:44px;top:51px" width="9" height="7"><path d="M0.8 3.5H9M3.6 0.6L0.8 3.5L3.6 6.4" stroke="#d2d2d2" stroke-width="1.2" fill="none"/></svg>
<svg style="left:65px;top:51px" width="9" height="7"><path d="M0 3.5H8.2M5.4 0.6L8.2 3.5L5.4 6.4" stroke="#d2d2d2" stroke-width="1.2" fill="none"/></svg>
<svg style="left:86px;top:53px" width="7" height="4"><path d="M0.5 0.5L3.5 3.5L6.5 0.5" stroke="#d6d6d6" stroke-width="1" fill="none"/></svg>
<svg style="left:101px;top:50px" width="9" height="9"><path d="M4.5 9V1.2M0.7 4.8L4.5 1L8.3 4.8" stroke="#4a4a4a" stroke-width="1.3" fill="none"/></svg>

<!-- address box -->
<div class="a" style="left:115px;top:46px;width:214px;height:16px;border:1px solid #eeeeee;background:#fff"></div>
<div class="a" style="left:328px;top:46px;width:15px;height:16px;border:1px solid #eeeeee;background:#fff"></div>
<svg style="left:117px;top:47px" width="12" height="12" viewBox="0 0 12 12">
<path d="M1 1H4.5L5.5 2.5H7.5V10H1Z" fill="#f5d98a"/>
<rect x="3.5" y="5" width="7.5" height="5.5" fill="#2f8fd8"/>
<rect x="4.5" y="10.5" width="5" height="1" fill="#d5d5d5"/>
</svg>
<svg style="left:134px;top:51px" width="4" height="7"><path d="M0.5 0.5L3.5 3.5L0.5 6.5" stroke="#555" stroke-width="1" fill="none"/></svg>
<div class="t" style="left:143px;top:48.5px;color:#1e1e1e">Questo PC</div>
<svg style="left:193px;top:51px" width="4" height="7"><path d="M0.5 0.5L3.5 3.5L0.5 6.5" stroke="#555" stroke-width="1" fill="none"/></svg>
<div class="t" style="left:203px;top:48.5px;color:#1e1e1e">Desktop</div>
<svg style="left:242px;top:51px" width="4" height="7"><path d="M0.5 0.5L3.5 3.5L0.5 6.5" stroke="#555" stroke-width="1" fill="none"/></svg>
<svg style="left:318px;top:52px" width="7" height="4"><path d="M0.5 0.5L3.5 3.5L6.5 0.5" stroke="#444" stroke-width="1.1" fill="none"/></svg>
<svg style="left:330px;top:48px" width="12" height="12" viewBox="0 0 12 12"><path d="M8 3.2A3.6 3.6 0 1 1 4.6 3" stroke="#666" stroke-width="1.5" fill="none"/><path d="M2.7 1.2L6.8 1.7L4.5 5.3Z" fill="#666"/></svg>
<!-- search box -->
<div class="a" style="left:348px;top:46px;width:158px;height:16px;border:1px solid #eeeeee;background:#fff"></div>
<div class="t" style="left:353px;top:48.5px;color:#6d6d6d">Cerca in Desktop</div>
<svg style="left:493px;top:49px" width="9" height="9" viewBox="0 0 9 9"><circle cx="5.7" cy="3.6" r="2.5" stroke="#4a4a4a" stroke-width="1.2" fill="none"/><path d="M3.9 5.4L0.6 8.7" stroke="#4a4a4a" stroke-width="1.5"/></svg>

<!-- command bar -->
<div class="t" style="left:47px;top:74px;color:#333">Organizza</div>
<svg style="left:92px;top:78px" width="4" height="3"><path d="M0 0H4L2 2.2Z" fill="#555"/></svg>
<div class="t" style="left:118px;top:74px;color:#333">Nuova cartella</div>
<svg style="left:444px;top:74px" width="11" height="9" viewBox="0 0 11 9"><path d="M0 0.5H11M0 2.5H11M0 4.5H11M0 6.5H11M0 8.5H11" stroke="#c8c8c8" stroke-width="1"/><path d="M2.5 0V9" stroke="#f5f6f8" stroke-width="0.8"/></svg>
<svg style="left:461px;top:78px" width="5" height="3"><path d="M0 0H5L2.5 2.5Z" fill="#444"/></svg>
<svg style="left:487px;top:73px" width="12" height="12" viewBox="0 0 12 12"><circle cx="6" cy="6" r="5.8" fill="#1565c0"/><text x="6" y="9.4" text-anchor="middle" font-size="9" font-weight="bold" fill="#fff" font-family="Liberation Sans">?</text></svg>


<!-- ===== sidebar ===== -->
<div class="a" style="left:142px;top:91px;width:12px;height:172px;background:#f3f3f3"></div>
<div class="a" style="left:142px;top:159px;width:12px;height:78px;background:#cdcdcd"></div>
<svg style="left:145px;top:96.5px" width="7" height="4"><path d="M0.5 3.5L3.5 0.5L6.5 3.5" stroke="#505050" stroke-width="1.3" fill="none"/></svg>
<svg style="left:145px;top:255px" width="7" height="4"><path d="M0.5 0.5L3.5 3.5L6.5 0.5" stroke="#505050" stroke-width="1.3" fill="none"/></svg>
<div class="a" style="left:32px;top:235.5px;width:109px;height:18px;background:#d9d9d9"></div>

<svg style="left:58px;top:97px" width="12" height="9" viewBox="0 0 12 9"><rect x="0" y="0" width="12" height="9" fill="#8ccaf0"/><rect x="1" y="1" width="10" height="7" fill="#55a8e6"/><rect x="4.5" y="3" width="3" height="3" fill="#2d7fc8"/></svg>
<div class="t" style="left:72px;top:96.1px">Photo Library</div>
<svg style="left:131px;top:97px" width="8" height="8" viewBox="0 0 8 8"><path d="M4.5 0.5L7.5 3.5L6.5 4L5 5.5L5 7L1 3L2.5 3L4 1.5Z" fill="#8a8a8a"/><path d="M2.5 5.5L0.3 7.7" stroke="#8a8a8a" stroke-width="1"/></svg>

<svg style="left:59px;top:114px" width="9" height="12" viewBox="0 0 9 12"><rect x="1" y="0" width="5.5" height="9.5" fill="#f7dc8c"/><rect x="1" y="0" width="1.6" height="9.5" fill="#ecc868"/><path d="M0.2 9.2Q4 11.8 8.5 9.2" stroke="#5aae5a" stroke-width="1.6" fill="none"/></svg>
<div class="t" style="left:72px;top:114.1px">Dropbox</div>
<svg style="left:131px;top:116px" width="8" height="8" viewBox="0 0 8 8"><path d="M4.5 0.5L7.5 3.5L6.5 4L5 5.5L5 7L1 3L2.5 3L4 1.5Z" fill="#8a8a8a"/><path d="M2.5 5.5L0.3 7.7" stroke="#8a8a8a" stroke-width="1"/></svg>

<svg style="left:59px;top:133.5px" width="8" height="11" viewBox="0 0 8 11"><rect x="0" y="0" width="7" height="10.5" fill="#f7dc8c"/><rect x="0" y="0" width="1.8" height="10.5" fill="#ecc868"/></svg>
<div class="t" style="left:72px;top:133.5px">History</div>
<svg style="left:59px;top:152px" width="8" height="11" viewBox="0 0 8 11"><rect x="0" y="0" width="7" height="10.5" fill="#f7dc8c"/><rect x="0" y="0" width="1.8" height="10.5" fill="#ecc868"/></svg>
<div class="a" style="left:72px;top:151.9px;width:69px;height:12px;overflow:hidden"><div class="t" style="left:0;top:0">Nuova cartella con</div></div>
<svg style="left:59px;top:170.5px" width="8" height="11" viewBox="0 0 8 11"><rect x="0" y="0" width="7" height="10.5" fill="#f7dc8c"/><rect x="0" y="0" width="1.8" height="10.5" fill="#ecc868"/></svg>
<div class="t" style="left:72px;top:170.6px">sa</div>
<svg style="left:59px;top:189.5px" width="8" height="11" viewBox="0 0 8 11"><rect x="0" y="0" width="7" height="10.5" fill="#f7dc8c"/><rect x="0" y="0" width="1.8" height="10.5" fill="#ecc868"/></svg>
<div class="t" style="left:72px;top:189.5px">Screenshots</div>

<svg style="left:52px;top:215.5px" width="12" height="8" viewBox="0 0 12 8"><path d="M0.6 7.3Q-0.3 4.6 2.4 4.3Q3.2 0.8 6.6 1.3Q9 1 9.7 3.7Q12 3.9 11.5 7.3Z" fill="#1d50a8"/></svg>
<div class="t" style="left:66px;top:215px">OneDrive</div>
<svg style="left:53px;top:239.5px" width="12" height="10" viewBox="0 0 12 10"><path d="M1.5 0.5L10 2.5V8.5L1.5 6.5Z" fill="#4aa3e8"/><path d="M2 7L10 9L11 8.3L3.5 6.2Z" fill="#8cc8f2"/><path d="M0.5 8.5L3 9.5" stroke="#e8b0b0" stroke-width="0.8"/></svg>
<div class="t" style="left:66px;top:239.9px">Questo PC</div>

<!-- ===== file list ===== -->
<svg style="left:265px;top:91px" width="7" height="4"><path d="M0.5 3.5L3.5 0.5L6.5 3.5" stroke="#b0b0b0" stroke-width="0.9" fill="none"/></svg>
<div class="t" style="left:171.5px;top:96.8px;color:#555c63">Nome</div>
<div class="a" style="left:370px;top:92px;width:1px;height:20px;background:#ececec"></div>
<div class="t" style="left:375.8px;top:96.8px;color:#555c63;letter-spacing:0.1px">Ultima modifica</div>
<div class="a" style="left:464px;top:92px;width:1px;height:20px;background:#ececec"></div>
<div class="t" style="left:469.8px;top:96.8px;color:#555c63">Tipo</div>

<svg style="left:173.7px;top:120.4px" width="8" height="9" viewBox="0 0 8 9"><rect x="0" y="0" width="7" height="8.3" fill="#f5da80"/><rect x="0" y="0" width="1.8" height="8.3" fill="#e9c862"/></svg>
<div class="t" style="left:187.5px;top:119.7px">doc</div>
<div class="t" style="left:375.8px;top:119.7px;color:#6d6d6d">30/09/16 19:35</div>
<div class="a" style="left:469.8px;top:119.7px;width:41px;height:12px;overflow:hidden"><div class="t" style="left:0;top:0;color:#6d6d6d">Cartella di file</div></div>
<svg style="left:173.7px;top:136.2px" width="8" height="9" viewBox="0 0 8 9"><rect x="0" y="0" width="7" height="8.4" fill="#f5da80"/><rect x="0" y="0" width="1.8" height="8.4" fill="#e9c862"/></svg>
<div class="t" style="left:187.5px;top:135.7px">Scrivania - MacBook Pro Old</div>
<div class="t" style="left:375.8px;top:135.7px;color:#6d6d6d">27/09/16 13:44</div>
<div class="a" style="left:469.8px;top:135.7px;width:41px;height:12px;overflow:hidden"><div class="t" style="left:0;top:0;color:#6d6d6d">Cartella di file</div></div>

<!-- horizontal scrollbar -->
<div class="a" style="left:157px;top:251px;width:355px;height:12px;background:#f0f0f0"></div>
<div class="a" style="left:171px;top:251px;width:246px;height:12px;background:#cdcdcd"></div>
<svg style="left:163px;top:254px" width="4" height="7"><path d="M3.5 0.5L0.5 3.5L3.5 6.5" stroke="#505050" stroke-width="1.3" fill="none"/></svg>
<svg style="left:503px;top:254px" width="4" height="7"><path d="M0.5 0.5L3.5 3.5L0.5 6.5" stroke="#505050" stroke-width="1.3" fill="none"/></svg>

<!-- ===== filename / type ===== -->
<div class="t r" style="left:40px;top:274.8px;width:86px;text-align:right">Nome file:</div>
<div class="t r" style="left:40px;top:291.8px;width:86px;text-align:right">Salva come:</div>
<div class="a" style="left:130px;top:272px;width:378px;height:16px;background:#f8fcff;border:1px solid #a9c2da"></div>
<div class="a" style="left:133.8px;top:274px;width:232px;height:12px;background:#3390f0"></div>
<div class="t" style="left:134px;top:275px;color:#fff">Jellyfish-3-Mbps.mkv_thumbs_[2016.10.04_22.23.31].jpg</div>
<svg style="left:498px;top:278px" width="7" height="4"><path d="M0.5 0.5L3.5 3.5L6.5 0.5" stroke="#7a7a7a" stroke-width="1.2" fill="none"/></svg>
<div class="a" style="left:130px;top:288px;width:378px;height:17px;background:#e5e5e5;border:1px solid #dadada"></div>
<div class="t" style="left:131.8px;top:291.8px;letter-spacing:-0.25px">JPG - JPEG Image (*.jpg)</div>
<svg style="left:498px;top:295px" width="7" height="4"><path d="M0.5 0.5L3.5 3.5L6.5 0.5" stroke="#7a7a7a" stroke-width="1.2" fill="none"/></svg>

<!-- ===== options ===== -->
<div class="t r" style="left:40px;top:319px;width:106px;text-align:right;color:#838383">Immagine JPEG</div>
<div class="t" style="left:150.2px;top:319px">Qualità (%):</div>
<div class="a" style="left:149px;top:333px;width:107px;height:19px;background:#fff;border:1px solid #bdbdbd"></div>
<div class="t" style="left:153.5px;top:335.9px">90</div>
<div class="t r" style="left:40px;top:356.9px;width:106px;text-align:right;color:#838383">Larghezza</div>
<div class="t r" style="left:40px;top:368.9px;width:106px;text-align:right;color:#838383">immagine</div>
<div class="t" style="left:150.2px;top:356.9px">Pixels:</div>
<div class="a" style="left:149px;top:371px;width:107px;height:19px;background:#fff;border:1px solid #bdbdbd"></div>
<div class="t" style="left:153.5px;top:373.5px">1024</div>

<div class="t r" style="left:290px;top:319px;width:51.5px;text-align:right;color:#838383">Layout</div>
<div class="t" style="left:345.6px;top:319px">Righe:</div>
<div class="a" style="left:345px;top:333px;width:107px;height:19px;background:#fff;border:1px solid #bdbdbd"></div>
<div class="t" style="left:349.2px;top:335.9px">4</div>
<div class="t" style="left:345.6px;top:356.9px">Colonne:</div>
<div class="a" style="left:345px;top:371px;width:107px;height:19px;background:#fff;border:1px solid #bdbdbd"></div>
<div class="t" style="left:349.2px;top:373.5px">4</div>

<!-- ===== bottom ===== -->
<svg style="left:39.5px;top:424.5px" width="7" height="4"><path d="M0.6 3.6L3.5 0.8L6.4 3.6" stroke="#333" stroke-width="1.3" fill="none"/></svg>
<div class="t" style="left:50.5px;top:421.1px">Nascondi cartelle</div>
<div class="a" style="left:352.5px;top:414.3px;width:68px;height:19.5px;background:#e1e1e1;border:1px solid #6e9bbf;box-shadow:inset 0 0 0 1px #d5e6f4"></div>
<div class="t c" style="left:352.5px;top:419.2px;width:68px;text-align:center">Salva</div>
<div class="a" style="left:430.6px;top:414.3px;width:68px;height:19.5px;background:#e1e1e1;border:1px solid #cfcfcf"></div>
<div class="t c" style="left:430.6px;top:419.2px;width:68px;text-align:center">Annulla</div>
<svg style="left:503px;top:435px" width="8" height="8" viewBox="0 0 8 8"><path d="M6 0h1v1h-1zM4 2h1v1h-1zM6 2h1v1h-1zM2 4h1v1h-1zM4 4h1v1h-1zM6 4h1v1h-1zM0 6h1v1h-1zM2 6h1v1h-1zM4 6h1v1h-1zM6 6h1v1h-1z" fill="#c0c0c0"/></svg>

</body></html>
